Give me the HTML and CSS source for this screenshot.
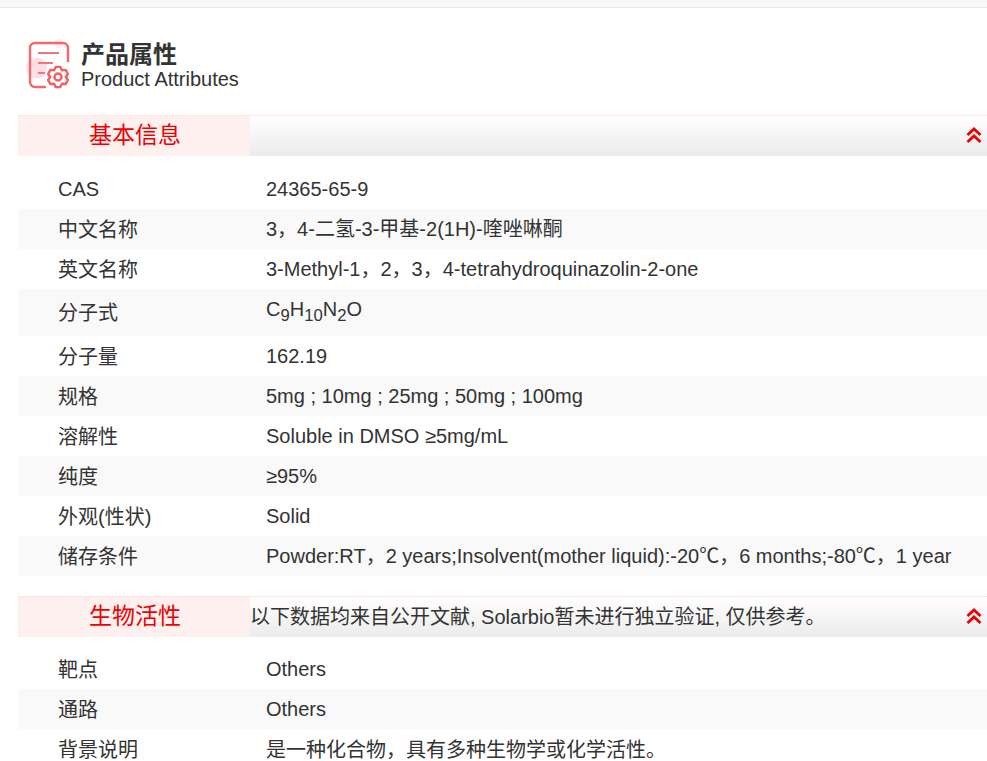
FILE: index.html
```html
<!DOCTYPE html>
<html lang="zh-CN">
<head>
<meta charset="utf-8">
<title>产品属性</title>
<link rel="stylesheet" href="styles.css">
</head>
<body>
<div class="topbar"></div>
<main class="panel">
  <header class="head">
    <svg class="head-icon" viewBox="0 0 46 50" width="46" height="50" aria-hidden="true">
      <circle cx="10.500" cy="29" r="10.500" fill="#fcdfe6"/>
      <circle cx="33" cy="4.500" r="4.500" fill="#fde8ec"/>
      <path d="M20 48H9a5 5 0 0 1-5-5V9a5 5 0 0 1 5-5h28a5 5 0 0 1 5 5v14" fill="none" stroke="#ee6a6e" stroke-width="2.400"/>
      <path d="M12 14h21M12 24h15M12 34h7" fill="none" stroke="#f0787b" stroke-width="2.200"/>
      <g transform="translate(32 38)">
        <path d="M-2.300-10.100 2.300-10.100 3.900-6.750 7.600-7.100 9.900-3 7.800 0 9.900 3 7.600 7.100 3.900 6.750 2.300 10.100-2.300 10.100-3.900 6.750-7.600 7.100-9.900 3-7.800 0-9.900-3-7.600-7.100-3.900-6.750Z" fill="#fff" stroke="#ee6064" stroke-width="2.400" stroke-linejoin="round"/>
        <circle r="3.500" fill="none" stroke="#ee6064" stroke-width="2.400"/>
      </g>
    </svg>
    <div class="head-text">
      <h1>产品属性</h1>
      <p>Product Attributes</p>
    </div>
  </header>

  <section class="sec first">
    <div class="bar">
      <h2>基本信息</h2>
      <span class="bar-note"></span>
      <svg class="chev" viewBox="0 0 16 16" width="16" height="16" aria-hidden="true"><path d="M1.500 8 8 2l6.500 6M1.500 15 8 9l6.500 6" fill="none" stroke="#ee0000" stroke-width="2.800"/></svg>
    </div>
    <table>
      <tr><th class="latin">CAS</th><td>24365-65-9</td></tr>
      <tr><th>中文名称</th><td>3，4-二氢-3-甲基-2(1H)-喹唑啉酮</td></tr>
      <tr><th>英文名称</th><td>3-Methyl-1，2，3，4-tetrahydroquinazolin-2-one</td></tr>
      <tr class="tall"><th>分子式</th><td class="formula">C<sub>9</sub>H<sub>10</sub>N<sub>2</sub>O</td></tr>
      <tr><th>分子量</th><td>162.19</td></tr>
      <tr><th>规格</th><td>5mg ; 10mg ; 25mg ; 50mg ; 100mg</td></tr>
      <tr><th>溶解性</th><td>Soluble in DMSO ≥5mg/mL</td></tr>
      <tr><th>纯度</th><td>≥95%</td></tr>
      <tr><th>外观(性状)</th><td>Solid</td></tr>
      <tr><th>储存条件</th><td>Powder:RT，2 years;Insolvent(mother liquid):-20℃，6 months;-80℃，1 year</td></tr>
    </table>
  </section>

  <section class="sec second">
    <div class="bar">
      <h2>生物活性</h2>
      <span class="bar-note">以下数据均来自公开文献, Solarbio暂未进行独立验证, 仅供参考。</span>
      <svg class="chev" viewBox="0 0 16 16" width="16" height="16" aria-hidden="true"><path d="M1.500 8 8 2l6.500 6M1.500 15 8 9l6.500 6" fill="none" stroke="#ee0000" stroke-width="2.800"/></svg>
    </div>
    <table>
      <tr><th>靶点</th><td>Others</td></tr>
      <tr><th>通路</th><td>Others</td></tr>
      <tr><th>背景说明</th><td class="cjk">是一种化合物，具有多种生物学或化学活性。</td></tr>
    </table>
  </section>
</main>
</body>
</html>
```
FILE: styles.css
```css
* { box-sizing: border-box; }
html, body { margin: 0; padding: 0; height: 761px; overflow: hidden; background: #fff; }
body {
  font-family: "Liberation Sans", "Noto Sans CJK SC", sans-serif;
  font-size: 20px;
  color: #333;
}
.topbar {
  height: 8px;
  background: #f8f8f8;
  border-bottom: 1px solid #e8e8e8;
}
.panel { padding: 0 0 0 18px; }
.head {
  display: flex;
  align-items: flex-start;
  gap: 9px;
  height: 107px;
  padding: 32px 0 0 8px;
}
.head-icon { margin-top: -1px; flex: none; }
.head-text h1 {
  margin: 0;
  font-size: 24px;
  line-height: 27px;
  padding-top: 1px;
  font-weight: 700;
  color: #333;
}
.head-text p {
  margin: 0;
  font-size: 20px;
  line-height: 22px;
  color: #333;
}
.sec { margin-bottom: 20px; }
.bar {
  display: flex;
  align-items: center;
  height: 41px;
  border-top: 1px solid #fde3e3;
  background: linear-gradient(#fff, #ebebeb);
}
.bar h2 {
  flex: none;
  width: 232px;
  height: 40px;
  margin: 0;
  padding-left: 71px;
  font-size: 23px;
  font-weight: 400;
  line-height: 38px;
  color: #ee0000;
  background: #fff0f0;
}
.bar-note { flex: 1; min-width: 0; white-space: nowrap; font-size: 20px; line-height: 40px; color: #333; }
.chev { flex: none; margin: 0 5px 2px 0; }
table {
  width: 100%;
  margin-top: 13px;
  border-collapse: collapse;
  line-height: 20px;
}
.second table { margin-top: 12px; }
tr { height: 40px; }
tr:nth-child(even) { background: #f9f9f9; }
tr.tall { height: 47px; }
th {
  width: 248px;
  padding: 2px 0 0 40px;
  font-weight: 400;
  text-align: left;
}
th.latin, tr.tall th { padding-top: 0; }
td { padding: 0; white-space: nowrap; }
td.cjk { padding-top: 2px; }
```
